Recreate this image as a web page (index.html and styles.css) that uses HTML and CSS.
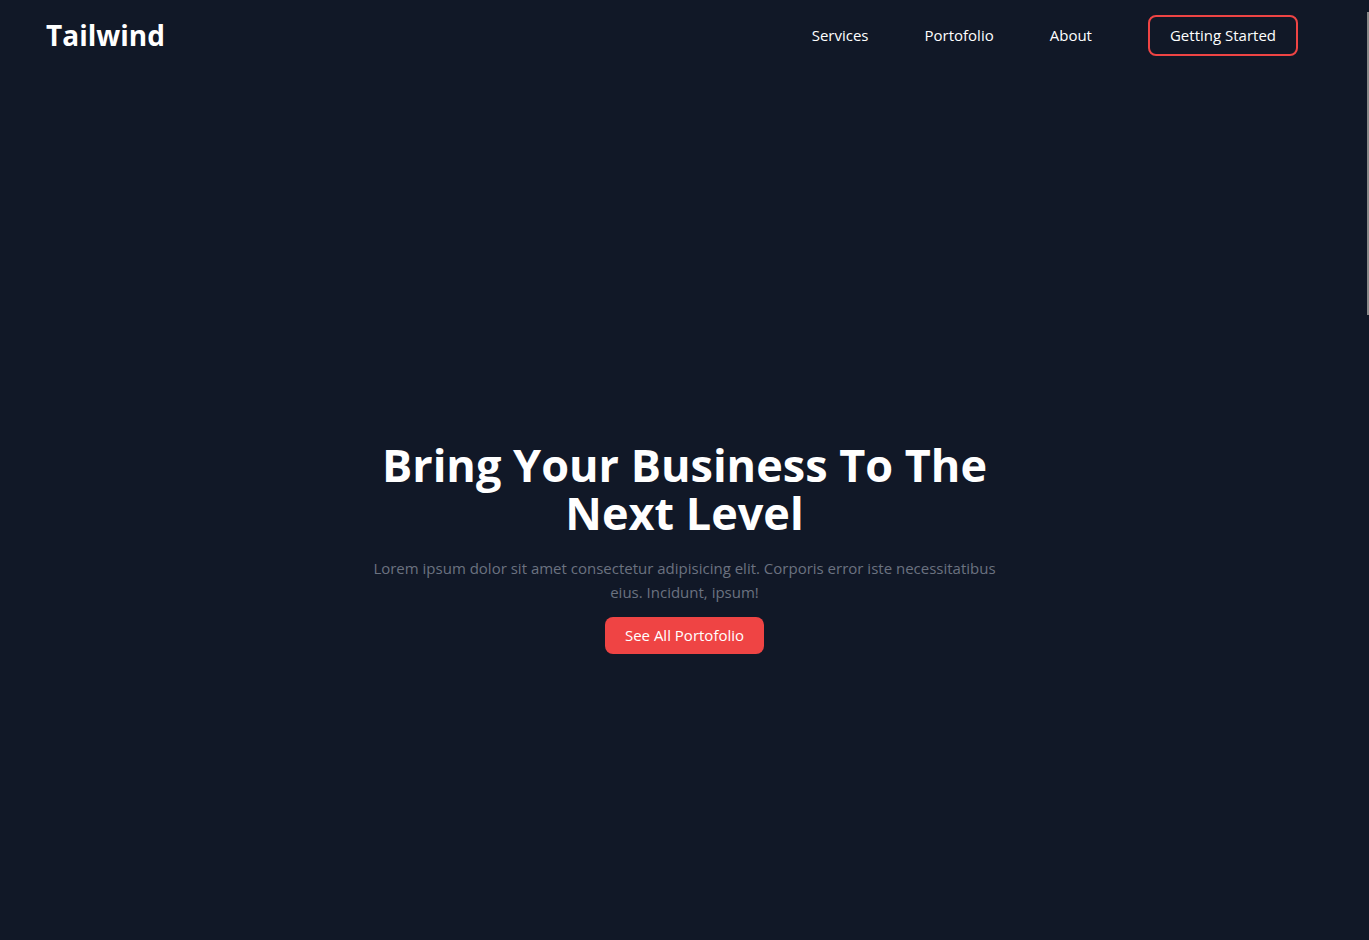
FILE: index.html
```html
<!DOCTYPE html>
<html lang="en">
<head>
<meta charset="utf-8">
<title>Tailwind</title>
<link rel="stylesheet" href="styles.css">
</head>
<body>
<header class="site-header">
  <a class="brand" href="#">Tailwind</a>
  <nav class="nav">
    <a class="nav-link" href="#">Services</a>
    <a class="nav-link" href="#">Portofolio</a>
    <a class="nav-link" href="#">About</a>
    <a class="nav-cta" href="#">Getting Started</a>
  </nav>
</header>
<main class="hero">
  <h1 class="hero-title">Bring Your Business To The<br>Next Level</h1>
  <p class="hero-text">Lorem ipsum dolor sit amet consectetur adipisicing elit. Corporis error iste necessitatibus eius. Incidunt, ipsum!</p>
  <a class="hero-btn" href="#">See All Portofolio</a>
</main>
<div class="scroll-thumb" aria-hidden="true"></div>
</body>
</html>
```
FILE: styles.css
```css
* { box-sizing: border-box; }
html, body { margin: 0; padding: 0; }
body {
  background: #111827;
  color: #fff;
  font-family: "Open Sans", "Noto Sans", sans-serif;
}
a { color: inherit; text-decoration: none; }
.site-header {
  height: 70px;
  display: flex;
  align-items: center;
  justify-content: space-between;
  padding: 0 71px 0 46px;
}
.brand {
  font-size: 28px;
  font-weight: 700;
  line-height: 36px;
}
.nav {
  display: flex;
  align-items: center;
  gap: 56px;
}
.nav-link {
  font-size: 15px;
  line-height: 24px;
}
.nav-cta {
  font-size: 15px;
  line-height: 24px;
  padding: 6px 20px 7px;
  border: 2px solid #ef4444;
  border-radius: 8px;
}
.hero {
  height: 870px;
  padding-top: 84px;
  display: flex;
  flex-direction: column;
  align-items: center;
  justify-content: center;
  text-align: center;
}
.hero-title {
  margin: 0;
  font-size: 45px;
  line-height: 48px;
  font-weight: 700;
}
.hero-text {
  margin: 19px 0 0;
  max-width: 640px;
  font-size: 15px;
  line-height: 24px;
  color: #6b7280;
}
.hero-btn {
  margin-top: 13px;
  background: #ef4444;
  color: #fff;
  font-size: 15px;
  line-height: 24px;
  padding: 6px 20px 7px;
  border-radius: 8px;
}
.scroll-thumb {
  position: fixed;
  top: 12px;
  right: 0;
  width: 2px;
  height: 303px;
  background: #8a8a8a;
}
```
